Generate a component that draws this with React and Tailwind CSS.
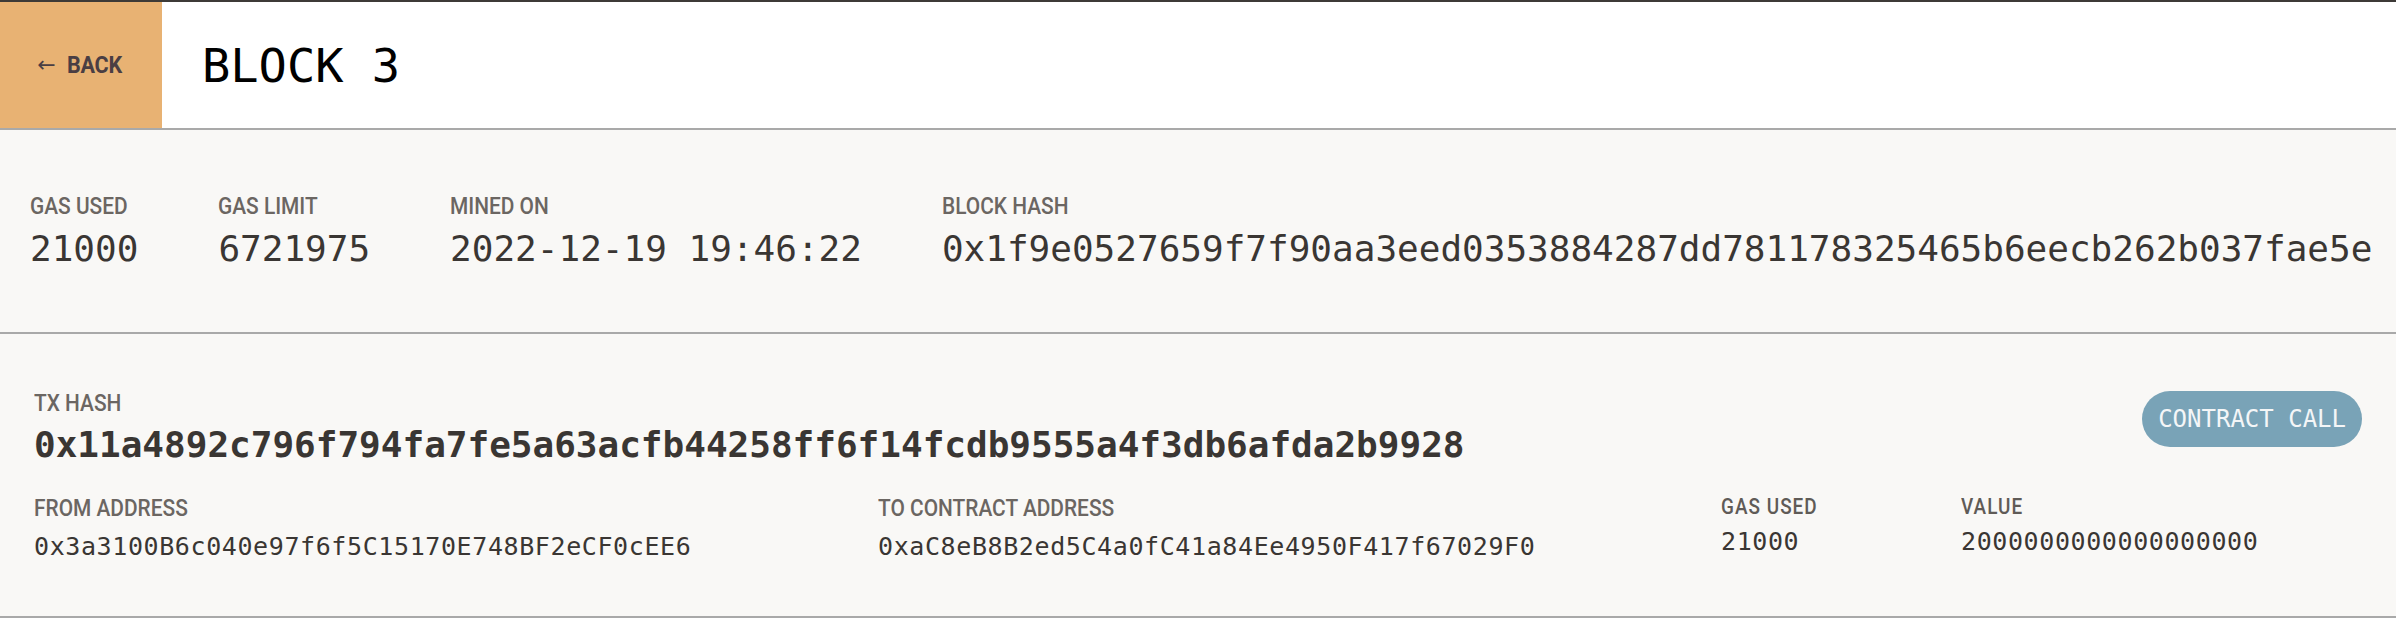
import React from "react";

const MONO = "font-['DejaVu_Sans_Mono',monospace]";
const SANS = "font-['Roboto',sans-serif]";

const block = {
  number: 3,
  gasUsed: "21000",
  gasLimit: "6721975",
  minedOn: "2022-12-19 19:46:22",
  hash: "0x1f9e0527659f7f90aa3eed0353884287dd781178325465b6eecb262b037fae5e",
};

const tx = {
  hash: "0x11a4892c796f794fa7fe5a63acfb44258ff6f14fcdb9555a4f3db6afda2b9928",
  from: "0x3a3100B6c040e97f6f5C15170E748BF2eCF0cEE6",
  to: "0xaC8eB8B2ed5C4a0fC41a84Ee4950F417f67029F0",
  gasUsed: "21000",
  value: "2000000000000000000",
  type: "CONTRACT CALL",
};

// condensed look: squeeze Roboto a bit since Roboto Condensed isn't around.
// w-0 so the (unscaled) label width doesn't widen the column
function Label({ children }) {
  return (
    <div className="w-0">
      <div className={`${SANS} text-[24px] leading-none font-medium text-[#6b6662] whitespace-nowrap scale-x-[0.87] origin-left`}>
        {children}
      </div>
    </div>
  );
}

function BlockStat({ label, value }) {
  return (
    <div className="flex flex-col gap-[13px]">
      <Label>{label}</Label>
      <div className={`${MONO} text-[36px] leading-none text-[#3a3633] whitespace-nowrap`}>{value}</div>
    </div>
  );
}

function TxField({ label, value }) {
  return (
    <div className="flex flex-col gap-[14px]">
      <Label>{label}</Label>
      <div className={`${MONO} text-[25px] leading-none tracking-[0.6px] text-[#3a3633] whitespace-nowrap`}>{value}</div>
    </div>
  );
}

function TxSmallField({ label, value }) {
  return (
    <div className="flex flex-col gap-[11px]">
      <div className={`${SANS} text-[22px] leading-none font-medium tracking-[1.2px] text-[#5f5b57] whitespace-nowrap scale-x-[0.86] origin-left`}>
        {label}
      </div>
      <div className={`${MONO} text-[25px] leading-none tracking-[0.6px] text-[#3a3633] whitespace-nowrap`}>{value}</div>
    </div>
  );
}

export default function App() {
  return (
    <div className="w-[2396px] h-[618px] bg-[#f9f8f6] overflow-hidden">
      <div className="h-[2px] bg-[#3d3a37]" />

      {/* header */}
      <div className="flex h-[126px] bg-white border-b-2 border-[#a9a9a9] box-content">
        <button className={`w-[162px] h-full bg-[#e8b273] flex items-center justify-center gap-[8px] ${SANS} text-[24px] font-bold text-[#4a3e43]`}>
          <span className="font-['DejaVu_Sans',sans-serif] font-normal text-[22px] leading-none">←</span>
          <span className="scale-x-[0.9] tracking-[-0.3px]">BACK</span>
        </button>
        <div className="flex items-center pl-[40px]">
          <h1 className={`${MONO} text-[47px] leading-none text-black`}>BLOCK {block.number}</h1>
        </div>
      </div>

      {/* block stats */}
      <div className="flex gap-[80px] px-[30px] pt-[64px] pb-[65px] border-b-2 border-[#a9a9a9]">
        <BlockStat label="GAS USED" value={block.gasUsed} />
        <BlockStat label="GAS LIMIT" value={block.gasLimit} />
        <BlockStat label="MINED ON" value={block.minedOn} />
        <BlockStat label="BLOCK HASH" value={block.hash} />
      </div>

      {/* transaction */}
      <div className="px-[34px] pt-[57px] pb-[57px] border-b-2 border-[#a9a9a9]">
        <div className="flex justify-between items-start">
          <div className="flex flex-col gap-[12px]">
            <Label>TX HASH</Label>
            <div className={`${MONO} text-[36px] leading-none font-bold text-[#3a3633] whitespace-nowrap`}>{tx.hash}</div>
          </div>
          <div className={`h-[56px] px-[16px] rounded-full bg-[#79a3b7] flex items-center ${MONO} text-[24px] leading-none text-[#f4f6f7] whitespace-nowrap`}>
            {tx.type}
          </div>
        </div>

        <div className="grid grid-cols-[844px_843px_240px_1fr] mt-[33px]">
          <TxField label="FROM ADDRESS" value={tx.from} />
          <TxField label="TO CONTRACT ADDRESS" value={tx.to} />
          <TxSmallField label="GAS USED" value={tx.gasUsed} />
          <TxSmallField label="VALUE" value={tx.value} />
        </div>
      </div>
    </div>
  );
}
